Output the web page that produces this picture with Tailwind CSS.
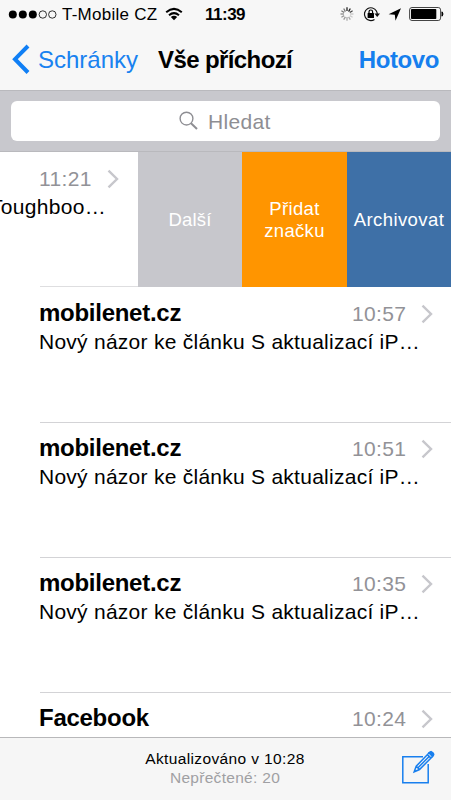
<!DOCTYPE html>
<html lang="cs">
<head>
<meta charset="utf-8">
<title>Vše příchozí</title>
<script src="https://cdn.jsdelivr.net/npm/@tailwindcss/browser@4"></script>
</head>
<body class="w-[451px] h-[800px] overflow-hidden bg-white text-black font-['Liberation_Sans',Arial,sans-serif] whitespace-nowrap">
<div class="flex flex-col w-[451px] h-[800px] overflow-hidden">
  <header class="h-[90px] shrink-0 bg-[#f7f7f7] flex flex-col">
    <div class="h-7 flex items-center pl-2 pr-[7px]">
      <svg width="50" height="28" viewBox="0 0 50 28" fill="none" stroke="#000"><g fill="#000" stroke="none"><circle cx="4.8" cy="14.5" r="4"/><circle cx="14.8" cy="14.5" r="4"/><circle cx="24.8" cy="14.5" r="4"/></g><circle cx="34.8" cy="14.5" r="3.7" stroke-width=".8"/><circle cx="44.3" cy="14.5" r="3.7" stroke-width=".8"/></svg>
      <span class="w-[101px] pl-1 pt-px text-[17px] leading-7 tracking-[0.25px]">T-Mobile CZ</span>
      <svg class="ml-1.5" width="18" height="28" viewBox="0 0 18 28" fill="none" stroke="#000" stroke-width="2"><path d="M1.2 12.2Q9 5.5 16.8 12.2M4 15.2Q9 11 14 15.2"/><path d="M5.8 17Q9 14.4 12.2 17L9 20.2Z" fill="#000" stroke="none"/></svg>
      <span class="ml-[22px] w-[42px] pt-px text-[17px] leading-7 font-bold tracking-[-0.5px]">11:39</span>
      <svg class="ml-auto" width="106" height="28" viewBox="0 0 106 28" fill="none">
        <g stroke-width="1.3"><path stroke="#222" d="M9 7.3V11M12.3 8.5L10.6 11.6"/><path stroke="#444" d="M14.6 10.8L11.8 12.5"/><path stroke="#ccc" d="M15.5 14H12M14.6 17.2L11.8 15.6"/><path stroke="#aaa" d="M12.3 19.6L10.6 16.8M9 20.7V17"/><path stroke="#999" d="M5.7 19.6L7.4 16.8M3.4 17.2L6.2 15.6M2.5 14H6"/><path stroke="#777" d="M3.4 10.8L6.2 12.5M5.7 8.5L7.4 11.6"/></g>
        <path d="M38.4 11A6.4 6.4 0 1 0 36.5 19.4M38.4 11Q39.5 13 39.2 15" stroke="#111" stroke-width="1.2"/><path d="M36.4 13.6H42L39.2 17Z" fill="#111"/>
        <rect x="29.6" y="13" width="6.4" height="5" rx=".5" fill="#000"/><path d="M31 13.4V11.8a1.8 1.8 0 0 1 3.6 0V13.4" stroke="#000" stroke-width="1.2"/>
        <path d="M63 8.3L57.5 20.8L56.8 14.8L50.6 14.2Z" fill="#000"/>
        <rect x="71.6" y="7.5" width="31" height="13" rx="2.4" stroke="#444" stroke-width="1"/><rect x="73" y="9" width="25.3" height="10" rx=".8" fill="#000"/><path d="M104 11.8q2 2.2 0 4.4Z" fill="#000" stroke="#000"/>
      </svg>
    </div>
    <div class="h-[62px] flex items-center pl-[11px] pr-3">
      <svg width="20" height="62" viewBox="0 0 20 62" fill="none" stroke="#107ff5" stroke-width="4"><path d="M17 18L4 31.2L17 44.5"/></svg>
      <span class="ml-[7px] w-[102px] pt-px text-2xl text-[#1982f0]">Schránky</span>
      <h1 class="ml-[18px] pt-px text-2xl font-bold tracking-[-0.6px]">Vše příchozí</h1>
      <span class="ml-auto pt-px text-2xl font-bold tracking-[-0.4px] text-[#167fee]">Hotovo</span>
    </div>
  </header>
  <div class="h-[62px] shrink-0 bg-[#c8c8cd] border-t border-b border-[#b9b9bd] pt-[10px] px-[11px]">
    <div class="w-[429px] h-10 rounded-[6px] bg-white flex items-center pl-[167px] text-[21px] text-[#8e8e93]">
      <svg width="21" height="22" viewBox="0 0 21 22" fill="none" stroke="#8e8e93"><circle cx="8.5" cy="8.6" r="6.4" stroke-width="1.4"/><path d="M13 13.2L19 19" stroke-width="2"/></svg>
      <span class="ml-[9px] pt-px tracking-[0.35px]">Hledat</span>
    </div>
  </div>
  <main class="flex-1 min-h-0 overflow-hidden">
    <article class="h-[135px] flex">
      <div class="w-[138px] relative overflow-hidden">
        <div class="flex items-center h-6 mt-[15px] pl-[39px] text-[21px] tracking-[0.35px] text-[#929297]"><span class="w-[55px]">11:21</span><svg class="ml-[13px]" width="12" height="20" viewBox="0 0 12 20" fill="none" stroke="#c7c7cc" stroke-width="2.4"><path d="M1.5 1.7L10 10L1.5 18.3"/></svg></div>
        <p class="-ml-[10px] mt-1 h-6 leading-6 text-[21px] tracking-[0.3px]">Toughboo…</p>
        <div class="absolute bottom-0 left-10 right-0 h-px bg-[#dedee0]"></div>
      </div>
      <div class="w-[104px] bg-[#c7c7cc] text-white text-[18.5px] tracking-[0.2px] flex items-center justify-center">Další</div>
      <div class="w-[105px] bg-[#ff9500] text-white text-[18.5px] tracking-[0.35px] leading-[22px] text-center flex items-center justify-center"><span>Přidat<br>značku</span></div>
      <div class="w-[104px] bg-[#3e70a7] text-white text-[18.5px] tracking-[0.4px] flex items-center justify-center">Archivovat</div>
    </article>
    <article class="ml-10 h-[136px] border-b border-[#d3d3d6] pt-[13px]">
      <div class="flex items-center h-[26px]"><h2 class="-ml-px text-2xl font-bold tracking-[-0.27px]">mobilenet.cz</h2><span class="ml-auto w-14 pt-0.5 text-[21px] tracking-[0.35px] text-[#929297]">10:57</span><svg class="ml-[13px] mr-[18px] mt-0.5" width="12" height="20" viewBox="0 0 12 20" fill="none" stroke="#c7c7cc" stroke-width="2.4"><path d="M1.5 1.7L10 10L1.5 18.3"/></svg></div>
      <p class="-ml-px mt-1 h-6 leading-6 text-[21px] tracking-[0.26px]">Nový názor ke článku S aktualizací iP…</p>
    </article>
    <article class="ml-10 h-[135px] border-b border-[#d3d3d6] pt-[12px]">
      <div class="flex items-center h-[26px]"><h2 class="-ml-px text-2xl font-bold tracking-[-0.27px]">mobilenet.cz</h2><span class="ml-auto w-14 pt-0.5 text-[21px] tracking-[0.35px] text-[#929297]">10:51</span><svg class="ml-[13px] mr-[18px] mt-0.5" width="12" height="20" viewBox="0 0 12 20" fill="none" stroke="#c7c7cc" stroke-width="2.4"><path d="M1.5 1.7L10 10L1.5 18.3"/></svg></div>
      <p class="-ml-px mt-1 h-6 leading-6 text-[21px] tracking-[0.26px]">Nový názor ke článku S aktualizací iP…</p>
    </article>
    <article class="ml-10 h-[135px] border-b border-[#d3d3d6] pt-[12px]">
      <div class="flex items-center h-[26px]"><h2 class="-ml-px text-2xl font-bold tracking-[-0.27px]">mobilenet.cz</h2><span class="ml-auto w-14 pt-0.5 text-[21px] tracking-[0.35px] text-[#929297]">10:35</span><svg class="ml-[13px] mr-[18px] mt-0.5" width="12" height="20" viewBox="0 0 12 20" fill="none" stroke="#c7c7cc" stroke-width="2.4"><path d="M1.5 1.7L10 10L1.5 18.3"/></svg></div>
      <p class="-ml-px mt-1 h-6 leading-6 text-[21px] tracking-[0.26px]">Nový názor ke článku S aktualizací iP…</p>
    </article>
    <article class="ml-10 pt-[12px]">
      <div class="flex items-center h-[26px]"><h2 class="-ml-px text-2xl font-bold tracking-[-0.27px]">Facebook</h2><span class="ml-auto w-14 pt-0.5 text-[21px] tracking-[0.35px] text-[#929297]">10:24</span><svg class="ml-[13px] mr-[18px] mt-0.5" width="12" height="20" viewBox="0 0 12 20" fill="none" stroke="#c7c7cc" stroke-width="2.4"><path d="M1.5 1.7L10 10L1.5 18.3"/></svg></div>
    </article>
  </main>
  <footer class="h-[63px] shrink-0 bg-[#f6f6f6] border-t border-[#b8b8ba] flex">
    <div class="w-[401px] pl-[49px] pt-[11px] text-center text-[15.5px] leading-[19px]"><p class="tracking-[0.38px]">Aktualizováno v 10:28</p><p class="tracking-[0.3px] text-[#a0a0a3]">Nepřečtené: 20</p></div>
    <svg width="34" height="50" viewBox="0 0 34 50" fill="none" stroke="#187fee" stroke-width="1.5"><path d="M22 18.8H1.8V44.8H27.2V26"/><path d="M13.2 33.8L15.2 28.2L28.2 14.8Q30 13.1 31.8 14.8Q33.4 16.5 31.8 18.2L18.5 31.5ZM15.2 28.2L18.5 31.5M17 29.8L28.6 18M26.4 16.6L30 20.1"/><path d="M28 15L30 13.8L32.4 16.3L31.3 18.3Z" fill="#187fee"/></svg>
  </footer>
</div>
</body>
</html>
